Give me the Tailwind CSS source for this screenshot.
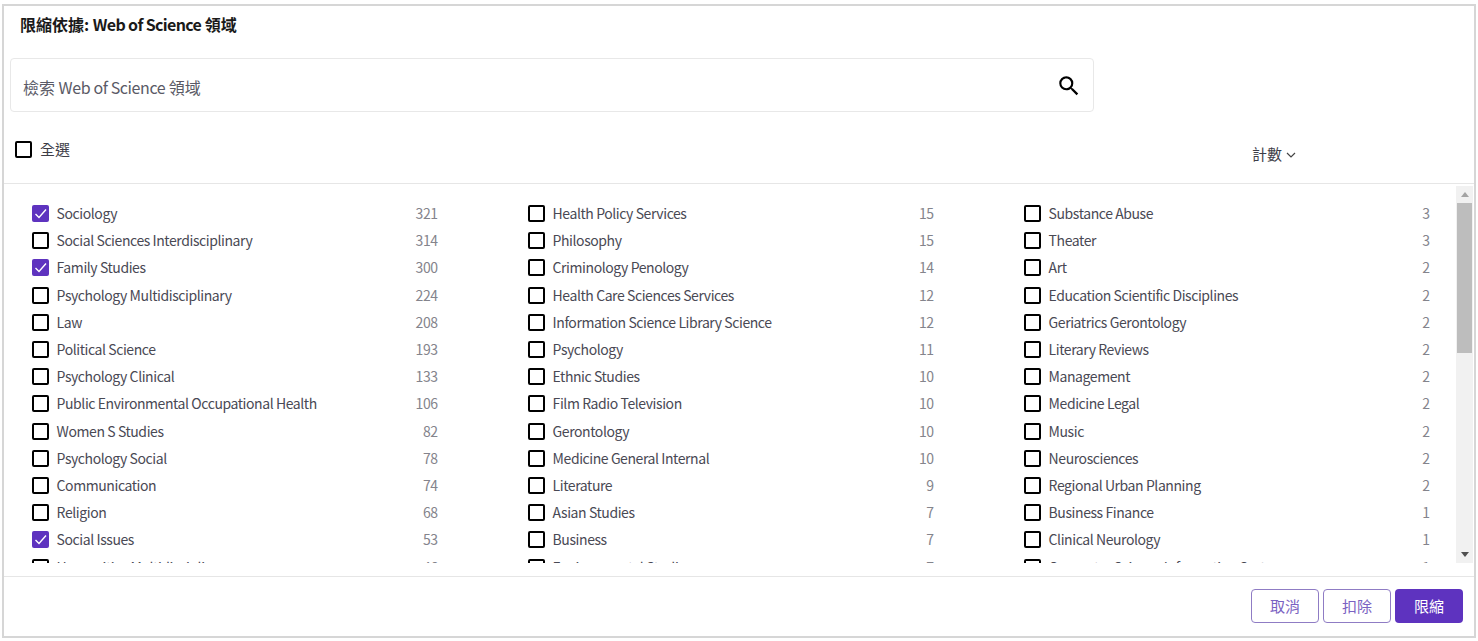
<!DOCTYPE html>
<html lang="zh-Hant"><head><meta charset="utf-8"><script src="https://cdn.jsdelivr.net/npm/@tailwindcss/browser@4"></script></head>
<body class="bg-white overflow-hidden font-['Noto_Sans_CJK_TC','Noto_Sans',sans-serif]">
<div class="ml-[2px] mt-[4px] w-[1474px] h-[634px] border-2 border-[#d6d6d6] flex flex-col">
  <div class="h-[178px] shrink-0 border-b border-[#e6e6e6] flex flex-col">
    <h1 class="pl-[16px] pt-[3px] h-[52px] text-[16px] leading-[30px] font-bold text-[#1a1a1a]">限縮依據: <span class="tracking-[-0.65px]">Web of Science</span> 領域</h1>
    <div class="ml-[6px] w-[1084px] h-[54px] border border-[#e8e8e8] rounded-[4px] flex items-center justify-between pl-[12px] pr-[11px]">
      <span class="text-[16px] text-[#5a5a66] mt-[3px]">檢索 <span class="tracking-[-0.4px]">Web of Science</span> 領域</span>
      <svg class="w-[26px] h-[26px] mt-[2px]" viewBox="0 0 24 24" fill="#000"><path d="M15.5 14h-.79l-.28-.27A6.47 6.47 0 0 0 16 9.5 6.5 6.5 0 1 0 9.5 16c1.61 0 3.09-.59 4.23-1.57l.27.28v.79l5 4.99L20.49 19l-4.99-5zm-6 0C7.01 14 5 11.99 5 9.5S7.01 5 9.5 5 14 7.01 14 9.5 11.99 14 9.5 14z"/></svg>
    </div>
    <div class="flex justify-between pl-[11px] pr-[177px] mt-[27px]">
      <label class="flex items-center gap-[8px] h-[20px] text-[15px] text-[#3d3d47]"><span class="w-[17px] h-[17px] border-2 border-black rounded-[2px]"></span>全選</label>
      <span class="flex items-center gap-[3px] text-[15px] text-[#3d3d47] mt-[4px]">計數<svg class="w-[12px] h-[12px] mt-[2px]" viewBox="0 0 12 12" fill="none" stroke="#444" stroke-width="1.2"><path d="M2 4l4 4 4-4"/></svg></span>
    </div>
  </div>
  <div class="h-[379px] shrink-0 flex overflow-hidden relative">
    <div class="w-[1452px] pl-[27.6px] pt-[16px] overflow-hidden">
      <div class="grid grid-flow-col grid-rows-14 grid-cols-3 w-[1398px] gap-x-[90px] text-[14px] tracking-[-0.42px] text-[#494954]">
<div class="flex items-center h-[27.2px]"><span class="w-[17px] h-[17px] bg-[#5e33bf] rounded-[2px] flex items-center justify-center"><svg class="w-[13px] h-[13px]" viewBox="0 0 13 13" fill="none" stroke="#fff" stroke-width="1.4"><path d="M1.5 7l3.5 3.5 7-8"/></svg></span><span class="ml-[8px]">Sociology</span><span class="ml-auto text-[#84848c]">321</span></div>
<div class="flex items-center h-[27.2px]"><span class="w-[17px] h-[17px] border-2 border-black rounded-[2px]"></span><span class="ml-[8px]">Social Sciences Interdisciplinary</span><span class="ml-auto text-[#84848c]">314</span></div>
<div class="flex items-center h-[27.2px]"><span class="w-[17px] h-[17px] bg-[#5e33bf] rounded-[2px] flex items-center justify-center"><svg class="w-[13px] h-[13px]" viewBox="0 0 13 13" fill="none" stroke="#fff" stroke-width="1.4"><path d="M1.5 7l3.5 3.5 7-8"/></svg></span><span class="ml-[8px]">Family Studies</span><span class="ml-auto text-[#84848c]">300</span></div>
<div class="flex items-center h-[27.2px]"><span class="w-[17px] h-[17px] border-2 border-black rounded-[2px]"></span><span class="ml-[8px]">Psychology Multidisciplinary</span><span class="ml-auto text-[#84848c]">224</span></div>
<div class="flex items-center h-[27.2px]"><span class="w-[17px] h-[17px] border-2 border-black rounded-[2px]"></span><span class="ml-[8px]">Law</span><span class="ml-auto text-[#84848c]">208</span></div>
<div class="flex items-center h-[27.2px]"><span class="w-[17px] h-[17px] border-2 border-black rounded-[2px]"></span><span class="ml-[8px]">Political Science</span><span class="ml-auto text-[#84848c]">193</span></div>
<div class="flex items-center h-[27.2px]"><span class="w-[17px] h-[17px] border-2 border-black rounded-[2px]"></span><span class="ml-[8px]">Psychology Clinical</span><span class="ml-auto text-[#84848c]">133</span></div>
<div class="flex items-center h-[27.2px]"><span class="w-[17px] h-[17px] border-2 border-black rounded-[2px]"></span><span class="ml-[8px]">Public Environmental Occupational Health</span><span class="ml-auto text-[#84848c]">106</span></div>
<div class="flex items-center h-[27.2px]"><span class="w-[17px] h-[17px] border-2 border-black rounded-[2px]"></span><span class="ml-[8px]">Women S Studies</span><span class="ml-auto text-[#84848c]">82</span></div>
<div class="flex items-center h-[27.2px]"><span class="w-[17px] h-[17px] border-2 border-black rounded-[2px]"></span><span class="ml-[8px]">Psychology Social</span><span class="ml-auto text-[#84848c]">78</span></div>
<div class="flex items-center h-[27.2px]"><span class="w-[17px] h-[17px] border-2 border-black rounded-[2px]"></span><span class="ml-[8px]">Communication</span><span class="ml-auto text-[#84848c]">74</span></div>
<div class="flex items-center h-[27.2px]"><span class="w-[17px] h-[17px] border-2 border-black rounded-[2px]"></span><span class="ml-[8px]">Religion</span><span class="ml-auto text-[#84848c]">68</span></div>
<div class="flex items-center h-[27.2px]"><span class="w-[17px] h-[17px] bg-[#5e33bf] rounded-[2px] flex items-center justify-center"><svg class="w-[13px] h-[13px]" viewBox="0 0 13 13" fill="none" stroke="#fff" stroke-width="1.4"><path d="M1.5 7l3.5 3.5 7-8"/></svg></span><span class="ml-[8px]">Social Issues</span><span class="ml-auto text-[#84848c]">53</span></div>
<div class="flex items-center h-[27.2px]"><span class="w-[17px] h-[17px] border-2 border-black rounded-[2px]"></span><span class="ml-[8px]">Humanities Multidisciplinary</span><span class="ml-auto text-[#84848c]">46</span></div>

<div class="flex items-center h-[27.2px]"><span class="w-[17px] h-[17px] border-2 border-black rounded-[2px]"></span><span class="ml-[8px]">Health Policy Services</span><span class="ml-auto text-[#84848c]">15</span></div>
<div class="flex items-center h-[27.2px]"><span class="w-[17px] h-[17px] border-2 border-black rounded-[2px]"></span><span class="ml-[8px]">Philosophy</span><span class="ml-auto text-[#84848c]">15</span></div>
<div class="flex items-center h-[27.2px]"><span class="w-[17px] h-[17px] border-2 border-black rounded-[2px]"></span><span class="ml-[8px]">Criminology Penology</span><span class="ml-auto text-[#84848c]">14</span></div>
<div class="flex items-center h-[27.2px]"><span class="w-[17px] h-[17px] border-2 border-black rounded-[2px]"></span><span class="ml-[8px]">Health Care Sciences Services</span><span class="ml-auto text-[#84848c]">12</span></div>
<div class="flex items-center h-[27.2px]"><span class="w-[17px] h-[17px] border-2 border-black rounded-[2px]"></span><span class="ml-[8px]">Information Science Library Science</span><span class="ml-auto text-[#84848c]">12</span></div>
<div class="flex items-center h-[27.2px]"><span class="w-[17px] h-[17px] border-2 border-black rounded-[2px]"></span><span class="ml-[8px]">Psychology</span><span class="ml-auto text-[#84848c]">11</span></div>
<div class="flex items-center h-[27.2px]"><span class="w-[17px] h-[17px] border-2 border-black rounded-[2px]"></span><span class="ml-[8px]">Ethnic Studies</span><span class="ml-auto text-[#84848c]">10</span></div>
<div class="flex items-center h-[27.2px]"><span class="w-[17px] h-[17px] border-2 border-black rounded-[2px]"></span><span class="ml-[8px]">Film Radio Television</span><span class="ml-auto text-[#84848c]">10</span></div>
<div class="flex items-center h-[27.2px]"><span class="w-[17px] h-[17px] border-2 border-black rounded-[2px]"></span><span class="ml-[8px]">Gerontology</span><span class="ml-auto text-[#84848c]">10</span></div>
<div class="flex items-center h-[27.2px]"><span class="w-[17px] h-[17px] border-2 border-black rounded-[2px]"></span><span class="ml-[8px]">Medicine General Internal</span><span class="ml-auto text-[#84848c]">10</span></div>
<div class="flex items-center h-[27.2px]"><span class="w-[17px] h-[17px] border-2 border-black rounded-[2px]"></span><span class="ml-[8px]">Literature</span><span class="ml-auto text-[#84848c]">9</span></div>
<div class="flex items-center h-[27.2px]"><span class="w-[17px] h-[17px] border-2 border-black rounded-[2px]"></span><span class="ml-[8px]">Asian Studies</span><span class="ml-auto text-[#84848c]">7</span></div>
<div class="flex items-center h-[27.2px]"><span class="w-[17px] h-[17px] border-2 border-black rounded-[2px]"></span><span class="ml-[8px]">Business</span><span class="ml-auto text-[#84848c]">7</span></div>
<div class="flex items-center h-[27.2px]"><span class="w-[17px] h-[17px] border-2 border-black rounded-[2px]"></span><span class="ml-[8px]">Environmental Studies</span><span class="ml-auto text-[#84848c]">7</span></div>

<div class="flex items-center h-[27.2px]"><span class="w-[17px] h-[17px] border-2 border-black rounded-[2px]"></span><span class="ml-[8px]">Substance Abuse</span><span class="ml-auto text-[#84848c]">3</span></div>
<div class="flex items-center h-[27.2px]"><span class="w-[17px] h-[17px] border-2 border-black rounded-[2px]"></span><span class="ml-[8px]">Theater</span><span class="ml-auto text-[#84848c]">3</span></div>
<div class="flex items-center h-[27.2px]"><span class="w-[17px] h-[17px] border-2 border-black rounded-[2px]"></span><span class="ml-[8px]">Art</span><span class="ml-auto text-[#84848c]">2</span></div>
<div class="flex items-center h-[27.2px]"><span class="w-[17px] h-[17px] border-2 border-black rounded-[2px]"></span><span class="ml-[8px]">Education Scientific Disciplines</span><span class="ml-auto text-[#84848c]">2</span></div>
<div class="flex items-center h-[27.2px]"><span class="w-[17px] h-[17px] border-2 border-black rounded-[2px]"></span><span class="ml-[8px]">Geriatrics Gerontology</span><span class="ml-auto text-[#84848c]">2</span></div>
<div class="flex items-center h-[27.2px]"><span class="w-[17px] h-[17px] border-2 border-black rounded-[2px]"></span><span class="ml-[8px]">Literary Reviews</span><span class="ml-auto text-[#84848c]">2</span></div>
<div class="flex items-center h-[27.2px]"><span class="w-[17px] h-[17px] border-2 border-black rounded-[2px]"></span><span class="ml-[8px]">Management</span><span class="ml-auto text-[#84848c]">2</span></div>
<div class="flex items-center h-[27.2px]"><span class="w-[17px] h-[17px] border-2 border-black rounded-[2px]"></span><span class="ml-[8px]">Medicine Legal</span><span class="ml-auto text-[#84848c]">2</span></div>
<div class="flex items-center h-[27.2px]"><span class="w-[17px] h-[17px] border-2 border-black rounded-[2px]"></span><span class="ml-[8px]">Music</span><span class="ml-auto text-[#84848c]">2</span></div>
<div class="flex items-center h-[27.2px]"><span class="w-[17px] h-[17px] border-2 border-black rounded-[2px]"></span><span class="ml-[8px]">Neurosciences</span><span class="ml-auto text-[#84848c]">2</span></div>
<div class="flex items-center h-[27.2px]"><span class="w-[17px] h-[17px] border-2 border-black rounded-[2px]"></span><span class="ml-[8px]">Regional Urban Planning</span><span class="ml-auto text-[#84848c]">2</span></div>
<div class="flex items-center h-[27.2px]"><span class="w-[17px] h-[17px] border-2 border-black rounded-[2px]"></span><span class="ml-[8px]">Business Finance</span><span class="ml-auto text-[#84848c]">1</span></div>
<div class="flex items-center h-[27.2px]"><span class="w-[17px] h-[17px] border-2 border-black rounded-[2px]"></span><span class="ml-[8px]">Clinical Neurology</span><span class="ml-auto text-[#84848c]">1</span></div>
<div class="flex items-center h-[27.2px]"><span class="w-[17px] h-[17px] border-2 border-black rounded-[2px]"></span><span class="ml-[8px]">Computer Science Information Systems</span><span class="ml-auto text-[#84848c]">1</span></div>
      </div>
    </div>
    <div class="w-[17px] shrink-0 bg-[#f1f1f1] flex flex-col mt-[2px]">
      <div class="h-[17px] flex items-center justify-center"><svg class="w-[8px] h-[5px]" viewBox="0 0 8 5" fill="#a3a3a3"><path d="M4 0l4 5H0z"/></svg></div>
      <div class="h-[150px] mx-[1px] bg-[#bdbdbd]"></div>
      <div class="mt-auto h-[17px] flex items-center justify-center"><svg class="w-[8px] h-[5px]" viewBox="0 0 8 5" fill="#505050"><path d="M0 0h8L4 5z"/></svg></div>
    </div>
  </div>
  <div class="mt-[13px] flex-1 border-t border-[#e6e6e6] flex justify-end items-start gap-[4px] pt-[12px] pr-[11px]">
    <button class="w-[68px] h-[34px] border border-[#8f7cc4] rounded-[4px] text-[15px] text-[#7a62c2]">取消</button>
    <button class="w-[68px] h-[34px] border border-[#8f7cc4] rounded-[4px] text-[15px] text-[#7a62c2]">扣除</button>
    <button class="w-[68px] h-[34px] bg-[#5e33bf] rounded-[4px] text-[15px] text-white">限縮</button>
  </div>
</div>
</body></html>
